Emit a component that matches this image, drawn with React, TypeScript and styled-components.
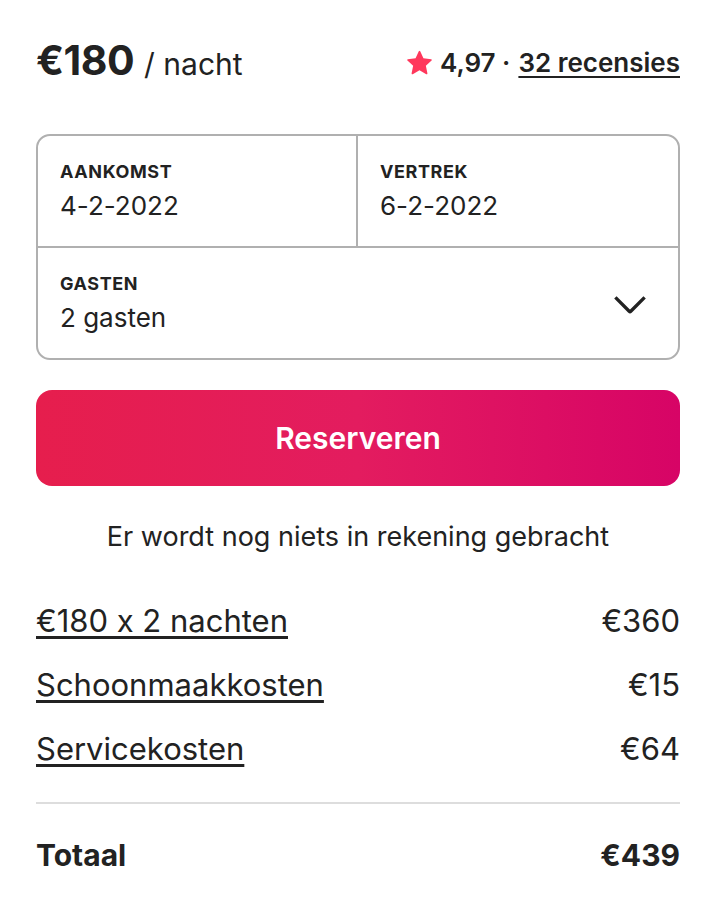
import styled, { createGlobalStyle } from "styled-components";

const GlobalStyle = createGlobalStyle`
  body {
    margin: 0;
    background: #ffffff;
    font-family: Inter, "Noto Sans", Arial, sans-serif;
    font-feature-settings: "calt" 0;
    color: #222222;
  }
`;

const Card = styled.div`
  width: 644px;
  padding: 35px 42px 0 36px;
`;

const Header = styled.div`
  display: flex;
  justify-content: space-between;
  align-items: baseline;
  height: 63px;
`;

const Price = styled.div`
  display: flex;
  align-items: baseline;
  gap: 10px;
`;

const Amount = styled.span`
  font-size: 41px;
  font-weight: 700;
  letter-spacing: -0.5px;
`;

const PerNight = styled.span`
  font-size: 30px;
  font-weight: 400;
`;

const Rating = styled.div`
  display: flex;
  align-items: center;
  gap: 8px;
  font-size: 26px;
  font-weight: 600;
`;

const Underlined = styled.a`
  color: #222222;
  text-decoration: underline;
  text-underline-offset: 4px;
`;

const Picker = styled.div`
  margin-top: 36px;
  border: 2px solid #b0b0b0;
  border-radius: 14px;
`;

const DateRow = styled.div`
  display: grid;
  grid-template-columns: 1fr 1fr;
  border-bottom: 2px solid #b0b0b0;
`;

const Field = styled.div<{ $divider?: boolean }>`
  display: flex;
  align-items: center;
  justify-content: space-between;
  height: 110px;
  padding: 0 30px 0 22px;
  border-right: ${(p) => (p.$divider ? "2px solid #b0b0b0" : "none")};
`;

const FieldText = styled.div`
  display: flex;
  flex-direction: column;
  gap: 8px;
`;

const Label = styled.span`
  font-size: 18px;
  font-weight: 700;
  letter-spacing: 0.6px;
`;

const Value = styled.span`
  font-size: 26px;
  font-weight: 400;
`;

const ReserveButton = styled.button`
  display: block;
  width: 100%;
  height: 96px;
  margin-top: 30px;
  border: none;
  border-radius: 16px;
  background: linear-gradient(to right, #e61e4d 0%, #e31c5f 50%, #d70466 100%);
  color: #ffffff;
  font-family: inherit;
  font-size: 30px;
  font-weight: 600;
`;

const Notice = styled.p`
  margin: 34px 0 0;
  text-align: center;
  font-size: 27px;
`;

const Lines = styled.div`
  display: flex;
  flex-direction: column;
  gap: 25px;
  margin-top: 48px;
  padding-bottom: 34px;
  border-bottom: 2px solid #dddddd;
`;

const Line = styled.div<{ $bold?: boolean }>`
  display: flex;
  justify-content: space-between;
  align-items: baseline;
  font-size: ${(p) => (p.$bold ? "30px" : "31px")};
  font-weight: ${(p) => (p.$bold ? 700 : 400)};
  line-height: 39px;
`;

const TotalLine = styled(Line)`
  margin-top: 32px;
`;

const Star = () => (
  <svg width="25" height="25" viewBox="0 0 32 32" fill="#ff385c">
    <path d="M15.1 1.58l-4.13 8.88-9.86 1.27a1 1 0 0 0-.54 1.74l7.3 6.57-1.97 9.85a1 1 0 0 0 1.48 1.06l8.62-5 8.63 5a1 1 0 0 0 1.48-1.06l-1.97-9.85 7.3-6.57a1 1 0 0 0-.55-1.73l-9.86-1.28-4.12-8.88a1 1 0 0 0-1.82 0z" />
  </svg>
);

const Chevron = () => (
  <svg width="36" height="36" viewBox="0 0 32 32" fill="none" stroke="#222222" strokeWidth="3">
    <path d="M29 11L16.7 23.3a1 1 0 0 1-1.4 0L3 11" />
  </svg>
);

const costs = [
  { label: "€180 x 2 nachten", amount: "€360" },
  { label: "Schoonmaakkosten", amount: "€15" },
  { label: "Servicekosten", amount: "€64" },
];

export default function App() {
  return (
    <>
      <GlobalStyle />
      <Card>
        <Header>
          <Price>
            <Amount>€180</Amount>
            <PerNight>/ nacht</PerNight>
          </Price>
          <Rating>
            <Star />
            <span>4,97 ·</span>
            <Underlined>32 recensies</Underlined>
          </Rating>
        </Header>

        <Picker>
          <DateRow>
            <Field $divider>
              <FieldText>
                <Label>AANKOMST</Label>
                <Value>4-2-2022</Value>
              </FieldText>
            </Field>
            <Field>
              <FieldText>
                <Label>VERTREK</Label>
                <Value>6-2-2022</Value>
              </FieldText>
            </Field>
          </DateRow>
          <Field>
            <FieldText>
              <Label>GASTEN</Label>
              <Value>2 gasten</Value>
            </FieldText>
            <Chevron />
          </Field>
        </Picker>

        <ReserveButton>Reserveren</ReserveButton>
        <Notice>Er wordt nog niets in rekening gebracht</Notice>

        <Lines>
          {costs.map((c) => (
            <Line key={c.label}>
              <Underlined>{c.label}</Underlined>
              <span>{c.amount}</span>
            </Line>
          ))}
        </Lines>
        <TotalLine $bold>
          <span>Totaal</span>
          <span>€439</span>
        </TotalLine>
      </Card>
    </>
  );
}
